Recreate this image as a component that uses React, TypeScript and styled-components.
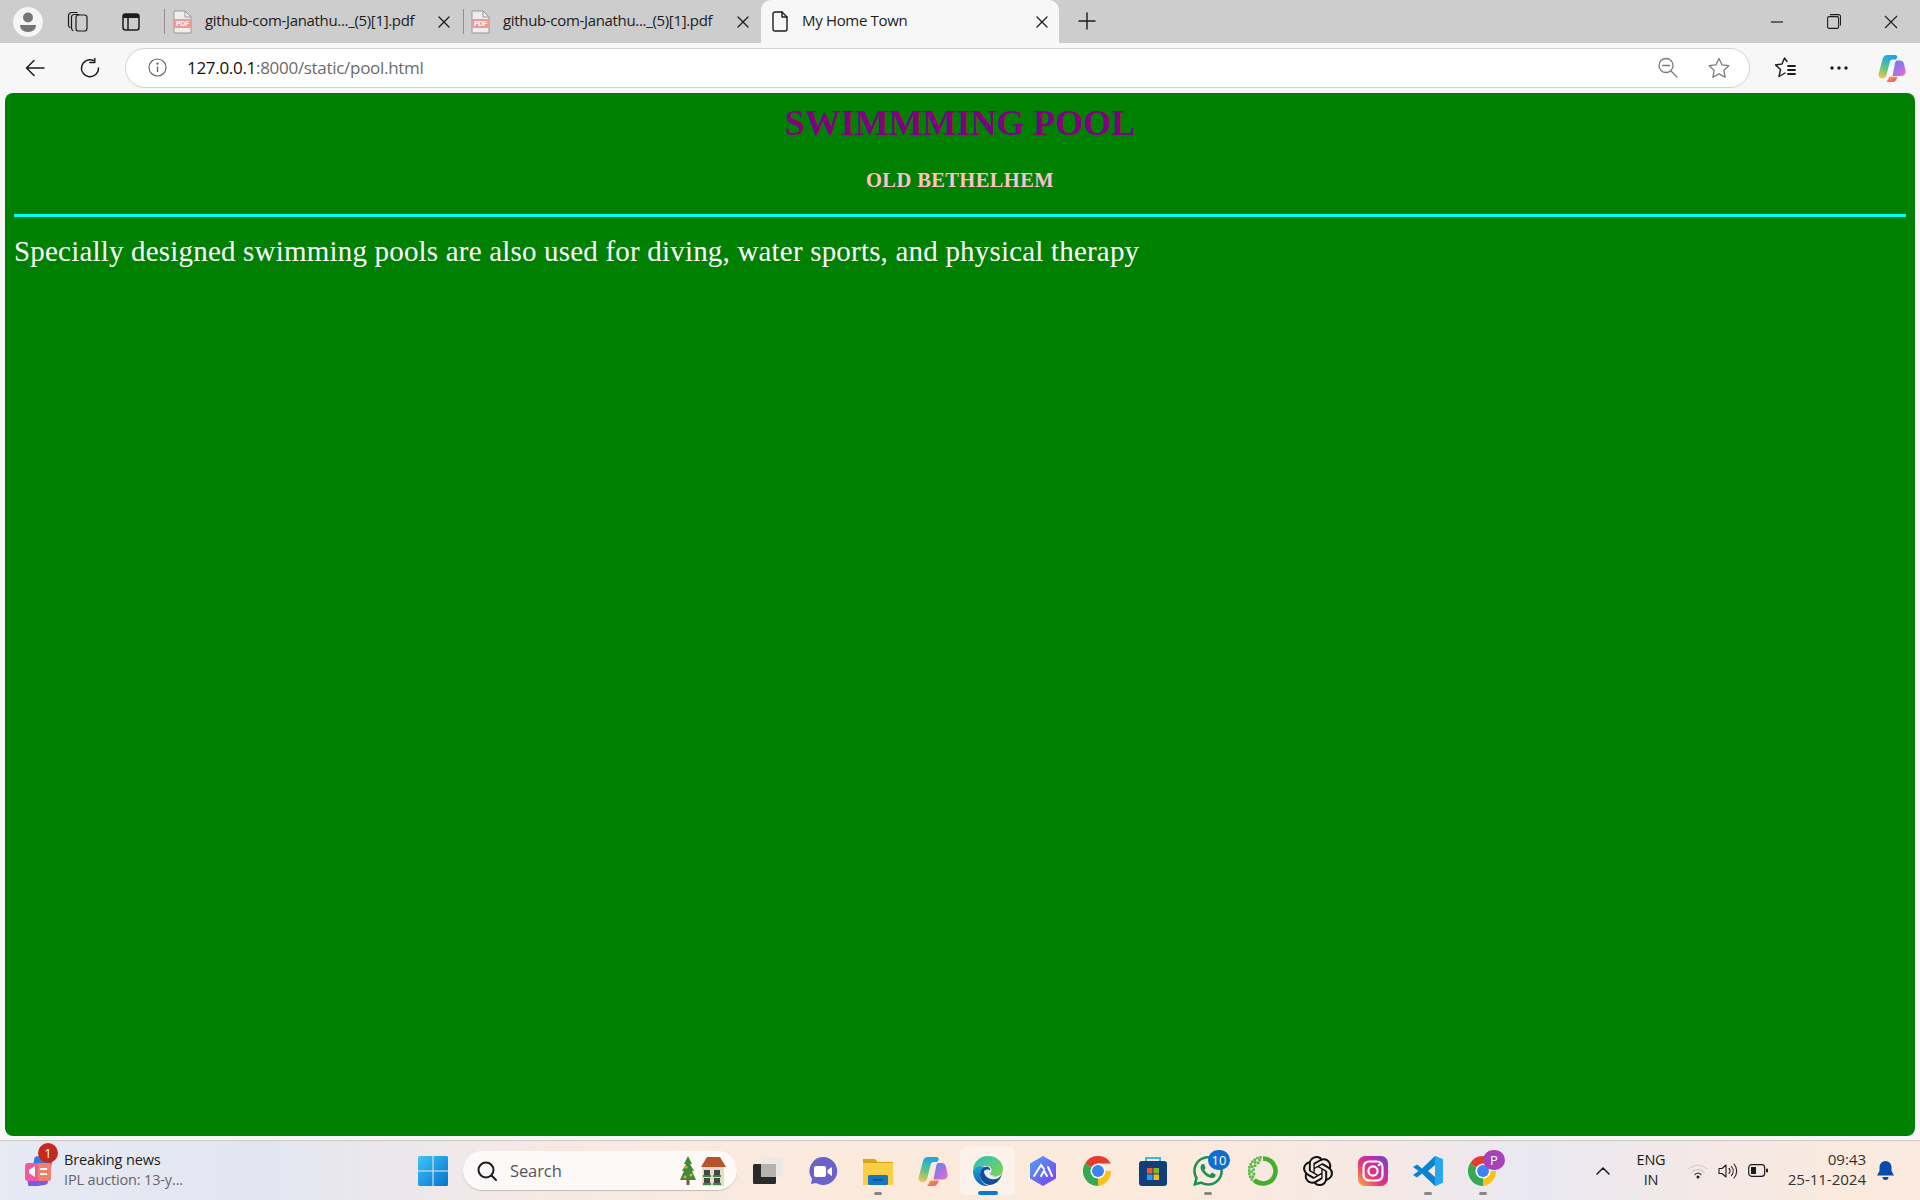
import React from "react";
import styled, { createGlobalStyle } from "styled-components";
import { SiOpenai, SiWhatsapp } from "react-icons/si";

const Global = createGlobalStyle`
  html, body { margin: 0; padding: 0; height: 100%; overflow: hidden; background: #f7f7f7; }
  #root { height: 100%; }
  * { box-sizing: border-box; }
`;

const UI = `"Open Sans", "Noto Sans", "Liberation Sans", sans-serif`;

const Screen = styled.div`
  width: 1920px;
  height: 1200px;
  display: flex;
  flex-direction: column;
  font-family: ${UI};
  color: #1c1c1c;
`;

const TabStrip = styled.div`
  height: 43px;
  background: #cdcdcd;
  display: flex;
  align-items: center;
  flex: none;
`;

const SlotBox = styled.div<{ $w: number; $lift?: boolean }>`
  width: ${(p) => p.$w}px;
  flex: none;
  height: 100%;
  display: flex;
  align-items: center;
  justify-content: center;
  padding-bottom: ${(p) => (p.$lift ? 2 : 0)}px;
`;

const StarSlot = styled(SlotBox)`
  margin: 0 15px 0 25px;
`;

const Separator = styled.div`
  width: 1px;
  height: 25px;
  background: #8e8e8e;
  flex: none;
`;

const Tab = styled.div<{ $w: number; $pad: number; $active?: boolean }>`
  width: ${(p) => p.$w}px;
  height: 43px;
  flex: none;
  display: flex;
  align-items: center;
  padding-left: ${(p) => p.$pad}px;
  background: ${(p) => (p.$active ? "#f7f7f7" : "transparent")};
  border-radius: ${(p) => (p.$active ? "10px 10px 0 0" : "0")};
  font-size: 15px;
  letter-spacing: -0.33px;
  white-space: nowrap;
`;

const TabLabel = styled.span<{ $w: number; $gap: number }>`
  width: ${(p) => p.$w}px;
  margin-left: ${(p) => p.$gap}px;
  flex: none;
  padding-bottom: 3px;
`;

const TabClose = styled.span<{ $gap: number }>`
  margin-left: ${(p) => p.$gap}px;
  display: flex;
`;

const WindowControls = styled.div`
  margin-left: auto;
  display: flex;
  height: 100%;
`;

const Toolbar = styled.div`
  height: 50px;
  flex: none;
  background: #f7f7f7;
  display: flex;
  align-items: center;
  padding-bottom: 1px;
`;

const AddressBar = styled.div`
  width: 1625px;
  margin-left: 15px;
  height: 40px;
  flex: none;
  border: 1.5px solid #d2d2d2;
  border-radius: 20px;
  background: #fff;
  display: flex;
  align-items: center;
  padding-left: 22px;
`;

const Url = styled.div`
  margin-left: 20px;
  font-size: 17px;
  letter-spacing: -0.3px;
  color: #6b6b6b;
  flex: 1;
  b { font-weight: 400; color: #111; }
`;

const PageWrap = styled.div`
  flex: 1;
  background: #f7f7f7;
  padding: 0 5px 4px;
  min-height: 0;
  display: flex;
`;

const Page = styled.main`
  flex: 1;
  background: #008000;
  border-radius: 8px;
  padding: 8px 9px;
  font-family: "Liberation Serif", "Times New Roman", serif;
`;

const Title = styled.h1`
  margin: 1px 0 0;
  text-align: center;
  font-size: 36px;
  line-height: 42px;
  font-weight: 700;
  color: #800080;
  letter-spacing: -0.05px;
`;

const Subtitle = styled.h3`
  margin: 24px 0 0;
  text-align: center;
  font-size: 20.5px;
  line-height: 24px;
  font-weight: 700;
  color: #ffc0cb;
  letter-spacing: 0.4px;
`;

const Rule = styled.hr`
  margin: 22px 0 0;
  height: 3px;
  border: 0;
  background: #00ffff;
`;

const Lead = styled.p`
  margin: 16px 0 0;
  font-size: 29px;
  line-height: 36px;
  color: #fff;
  letter-spacing: 0.19px;
`;

const Taskbar = styled.footer`
  height: 60px;
  flex: none;
  border-top: 1px solid #cfcac6;
  background: linear-gradient(90deg, #e7e9f3 0%, #e3e6f2 14%, #f6e9e6 28%, #fbeadc 45%, #fbeadd 62%, #f5e9e6 72%, #e9e8f2 80%, #f1e8ea 86%, #fbeadd 97%, #fae9e0 100%);
  display: flex;
  align-items: center;
`;

const News = styled.div`
  width: 404px;
  flex: none;
  display: flex;
  align-items: center;
  padding-left: 24px;
  position: relative;
`;

const NewsBadge = styled.span`
  position: absolute;
  left: 38px;
  top: -7px;
  width: 20px;
  height: 20px;
  border-radius: 50%;
  background: #c42b1c;
  color: #fff;
  font-size: 13px;
  line-height: 20px;
  text-align: center;
`;

const NewsText = styled.div`
  margin-left: 10px;
  font-size: 14.5px;
  line-height: 20px;
  letter-spacing: -0.15px;
  color: #1c1c1c;
  padding-bottom: 1px;
  span { display: block; color: #666; }
`;

const Tile = styled.div<{ $w?: number; $active?: boolean }>`
  width: ${(p) => p.$w ?? 55}px;
  height: 48px;
  flex: none;
  display: flex;
  align-items: center;
  justify-content: center;
  position: relative;
  border-radius: 5px;
  background: ${(p) => (p.$active ? "rgba(255,255,255,.4)" : "transparent")};
`;

const Running = styled.i<{ $active?: boolean }>`
  position: absolute;
  bottom: 0;
  left: 50%;
  transform: translateX(-50%);
  width: ${(p) => (p.$active ? 20 : 8)}px;
  height: ${(p) => (p.$active ? 4 : 3)}px;
  border-radius: 2px;
  background: ${(p) => (p.$active ? "#0a78d4" : "#8a8580")};
`;

const CountBadge = styled.span<{ $bg: string }>`
  position: absolute;
  top: 3px;
  right: 5px;
  width: 22px;
  height: 20px;
  border-radius: 10px;
  background: ${(p) => p.$bg};
  color: #fff;
  font-size: 13px;
  line-height: 20px;
  text-align: center;
`;

const SearchBox = styled.div`
  width: 274px;
  height: 39px;
  margin: 0 3px 0 2px;
  flex: none;
  border-radius: 20px;
  background: rgba(255, 255, 255, 0.72);
  box-shadow: 0 1px 1px rgba(120, 100, 90, 0.35);
  display: flex;
  align-items: center;
  padding-left: 13px;
  color: #555;
  font-size: 16.5px;
  letter-spacing: -0.1px;
`;

const SearchText = styled.span`
  margin-left: 12px;
  flex: 1;
`;

const SearchArt = styled.svg`
  margin-right: 11px;
`;

const Tray = styled.div`
  margin-left: auto;
  padding-right: 16px;
  display: flex;
  align-items: center;
  height: 100%;
  font-size: 14.5px;
  color: #1c1c1c;
`;

const Lang = styled.div`
  width: 50px;
  text-align: center;
  line-height: 20px;
  margin: 0 7px 2px 8px;
  letter-spacing: -0.2px;
`;

const TrayIcon = styled.div`
  width: 30px;
  display: flex;
  justify-content: center;
`;

const Clock = styled.div`
  width: 92px;
  margin: 0 0 3px 1px;
  text-align: right;
  font-size: 15.2px;
  line-height: 20px;
  letter-spacing: -0.1px;
  color: #333;
`;

const Bell = styled.div`
  width: 38px;
  display: flex;
  justify-content: center;
`;

const ln = { fill: "none", stroke: "#1c1c1c", strokeWidth: 1.4, strokeLinecap: "round" as const, strokeLinejoin: "round" as const };

const PdfIcon = () => (
  <svg width="19" height="24" viewBox="0 0 19 24">
    <path d="M1 1h11l6 6v16H1z" fill="#eee" stroke="#9a9a9a" />
    <path d="M12 1v6h6" fill="none" stroke="#9a9a9a" />
    <rect x="0" y="9" width="19" height="9" fill="#ec9a9a" />
    <text x="9.5" y="16" fontSize="7" fontWeight="700" textAnchor="middle" fill="#fff" fontFamily="Liberation Sans">PDF</text>
  </svg>
);
const CloseIcon = ({ s = 12 }: { s?: number }) => (
  <svg width={s} height={s} viewBox="0 0 12 12"><path d="M1 1l10 10M11 1L1 11" {...ln} strokeWidth={1.3} /></svg>
);

const EdgeIcon = () => (
  <svg width="30" height="30" viewBox="0 0 30 30">
    <defs>
      <linearGradient id="eg1" x1="0" y1="0" x2="1" y2="1"><stop offset="0" stopColor="#2bbcc0" /><stop offset="1" stopColor="#7fd64e" /></linearGradient>
      <linearGradient id="eg2" x1="0" y1="0" x2="0" y2="1"><stop offset="0" stopColor="#1ba3e0" /><stop offset="1" stopColor="#0c62b0" /></linearGradient>
    </defs>
    <path d="M0 15C0 6 7 0 15 0c9 0 15 6 15 13 0 5-3 7-7 7-3 0-6-1-6-3 3-2 2-7-4-7C7 10 2 12 0 15z" fill="url(#eg1)" />
    <path d="M0 15c2-4 7-6 12-4-3 2-5 4-5 8 0 5 4 10 9 11C7 31 0 24 0 15z" fill="url(#eg2)" />
    <path d="M7 19c0-4 2-7 5-8 3-1 6 1 5 4-1 6 6 7 12 3-2 7-7 11-13 11-5-1-9-5-9-10z" fill="#0f4f9b" />
    <path d="M11 15c2-2 6-2 6 0-1 6 6 7 12 3-3 5-7 6-11 5-4-1-7-4-7-8z" fill="#fff" opacity=".9" />
  </svg>
);
const ChromeIcon = ({ s = 30 }: { s?: number }) => (
  <svg width={s} height={s} viewBox="0 0 30 30">
    <path d="M15 15L2 7.5A15 15 0 0 1 28 7.5H15z" fill="#e33b2e" />
    <path d="M15 15L15 30A15 15 0 0 1 2 7.5z" fill="#34a853" />
    <path d="M15 15H28A15 15 0 0 1 15 30z" fill="#fbc116" />
    <circle cx="15" cy="15" r="7.6" fill="#fff" />
    <circle cx="15" cy="15" r="6" fill="#3f82f1" />
  </svg>
);
const CopilotIcon = ({ s = 30 }: { s?: number }) => (
  <svg width={s} height={s} viewBox="0 0 30 30">
    <defs>
      <linearGradient id={`cp1${s}`} x1="0.5" y1="0" x2="0.2" y2="1"><stop offset="0" stopColor="#1aa5e8" /><stop offset=".55" stopColor="#5cc48a" /><stop offset="1" stopColor="#f4c542" /></linearGradient>
      <linearGradient id={`cp2${s}`} x1="0" y1="0" x2="1" y2="1"><stop offset="0" stopColor="#4f8cf0" /><stop offset=".6" stopColor="#b66de0" /><stop offset="1" stopColor="#e878b8" /></linearGradient>
      <linearGradient id={`cp3${s}`} x1="0" y1="0" x2="1" y2="1"><stop offset="0" stopColor="#f5a14a" /><stop offset="1" stopColor="#ef4d6a" /></linearGradient>
    </defs>
    <path d="M10 1h8c2 0 3 1 2.5 3L19 6h-3c-2 0-3 1-3.5 3L9 23c-.5 2-2 3-4 3H4c-3 0-4-3-3-6L5 5c.7-2.5 2.5-4 5-4z" fill={`url(#cp1${s})`} />
    <path d="M19.5 7h4c2.5 0 4 1.5 4.500 4l1.500 7c.5 3-1 5.500-4.500 5.500h-9.500L18 11c.3-2 .8-3 1.500-4z" fill={`url(#cp2${s})`} />
    <path d="M12 24.500h9l-1.500 3c-.8 1.500-2 2.500-4 2.500h-5c-1 0-1.500-.5-1-1 1-1 2-2.500 2.500-4.500z" fill={`url(#cp3${s})`} />
  </svg>
);

const ringDots = [100, 113, 126, 139, 152, 165, 178, 191, 204, 217, 106, 132, 158, 184, 210, 120, 146, 172, 198].map((a, i) => {
  const r = i < 10 ? 14 : i < 15 ? 11.5 : 9.5;
  const rad = (a * Math.PI) / 180;
  return { x: 15 + r * Math.cos(rad) - 1.3, y: 15 - r * Math.sin(rad) - 1.3 };
});

const icons = {
  task: (
    <svg width="30" height="30" viewBox="0 0 30 30">
      <rect x="0" y="8" width="23" height="20" rx="1.5" fill="#2a2a2a" />
      <rect x="8" y="1" width="22" height="20" rx="1.5" fill="#ece8e4" opacity=".9" />
      <rect x="8" y="8" width="15" height="13" fill="#b5b2af" />
    </svg>
  ),
  meet: (
    <svg width="30" height="30" viewBox="0 0 30 30">
      <path d="M15 1a14 14 0 1 1-7 26l-5 1 1-5A14 14 0 0 1 15 1z" fill="#6a62c8" />
      <rect x="6" y="10" width="12" height="11" rx="2" fill="#fff" />
      <path d="M19.5 14l4.5-3v9l-4.5-3z" fill="#fff" />
    </svg>
  ),
  folder: (
    <svg width="30" height="28" viewBox="0 0 30 28">
      <path d="M0 2h12l3 3h15v4H0z" fill="#dca315" />
      <rect x="0" y="6" width="30" height="22" fill="#fbcf45" />
      <rect x="5" y="18" width="20" height="10" rx="1.5" fill="#1776c4" />
      <rect x="10" y="22" width="10" height="1.5" fill="#0b4a85" />
    </svg>
  ),
  hex: (
    <svg width="28" height="30" viewBox="0 0 28 30">
      <defs><linearGradient id="hx" x1="0" y1="0" x2="1" y2="1"><stop offset="0" stopColor="#4da2f5" /><stop offset="1" stopColor="#7b3ff0" /></linearGradient></defs>
      <path d="M14 0l13 7.5v15L14 30 1 22.5v-15z" fill="url(#hx)" />
      <path d="M5 20l7-11 3 4M12 20l3-5 3 5M19 11l4 9" fill="none" stroke="#fff" strokeWidth="2" strokeLinecap="round" />
    </svg>
  ),
  store: (
    <svg width="30" height="30" viewBox="0 0 30 30">
      <path d="M8 5V2h14v3" fill="none" stroke="#35b6ee" strokeWidth="2" />
      <rect x="1" y="5" width="28" height="25" rx="3" fill="#123f7a" />
      <rect x="9" y="12" width="5.5" height="5.5" fill="#ef5a24" />
      <rect x="15.5" y="12" width="5.5" height="5.5" fill="#7db928" />
      <rect x="9" y="18.5" width="5.5" height="5.5" fill="#1ba5ee" />
      <rect x="15.5" y="18.5" width="5.5" height="5.5" fill="#fdb813" />
    </svg>
  ),
  whatsapp: <SiWhatsapp size={30} color="#1f8f57" />,
  ring: (
    <svg width="30" height="30" viewBox="0 0 30 30">
      <path d="M15 2.5A12.5 12.5 0 1 1 6.2 23.9" fill="none" stroke="#43b02a" strokeWidth="4.6" />
      {ringDots.map((d, i) => (
        <rect key={i} x={d.x} y={d.y} width="2.6" height="2.6" fill="#5cb84a" />
      ))}
    </svg>
  ),
  gpt: <SiOpenai size={30} color="#111" />,
  insta: (
    <svg width="30" height="30" viewBox="0 0 30 30">
      <defs><linearGradient id="ig" x1="0" y1="1" x2="1" y2="0"><stop offset="0" stopColor="#fbb03b" /><stop offset=".4" stopColor="#e8347a" /><stop offset=".75" stopColor="#b52fb0" /><stop offset="1" stopColor="#5a52d0" /></linearGradient></defs>
      <rect width="30" height="30" rx="7" fill="url(#ig)" />
      <rect x="5.5" y="5.5" width="19" height="19" rx="5.5" fill="none" stroke="#fff" strokeWidth="2.2" />
      <circle cx="15" cy="15" r="4.6" fill="none" stroke="#fff" strokeWidth="2.2" />
      <circle cx="21" cy="9" r="1.3" fill="#fff" />
    </svg>
  ),
  vscode: (
    <svg width="30" height="30" viewBox="0 0 30 30">
      <path d="M22 0l8 3.5v23L22 30 9 17.5l-5 4L0 19l5.500-4L0 11l4-2.500 5 4z" fill="#0a84d0" />
      <path d="M22 0l8 3.5v23L22 30z" fill="#26a8f0" />
      <path d="M22 9l-7 6 7 6z" fill="#f8ebe1" />
    </svg>
  ),
};

const tiles: { key: string; el: React.ReactNode; run?: boolean; active?: boolean; badge?: [string, string] }[] = [
  { key: "task", el: icons.task },
  { key: "meet", el: icons.meet },
  { key: "folder", el: icons.folder, run: true },
  { key: "copilot", el: <CopilotIcon /> },
  { key: "edge", el: <EdgeIcon />, run: true, active: true },
  { key: "hex", el: icons.hex },
  { key: "chrome", el: <ChromeIcon /> },
  { key: "store", el: icons.store },
  { key: "wa", el: icons.whatsapp, run: true, badge: ["10", "#0f6cd0"] },
  { key: "ring", el: icons.ring },
  { key: "gpt", el: icons.gpt },
  { key: "insta", el: icons.insta },
  { key: "vs", el: icons.vscode, run: true },
  { key: "chrome2", el: <ChromeIcon />, run: true, badge: ["P", "#a742b8"] },
];

export default function App() {
  return (
    <Screen>
      <Global />
      <TabStrip>
        <SlotBox $w={56}>
          <svg width="30" height="30" viewBox="0 0 30 30">
            <circle cx="15" cy="15" r="15" fill="#f5f5f5" />
            <circle cx="15" cy="10.5" r="5" fill="#767676" />
            <path d="M7 18h16c0 4-3 7-8 7s-8-3-8-7z" fill="#767676" />
          </svg>
        </SlotBox>
        <SlotBox $w={44}>
          <svg width="22" height="22" viewBox="0 0 22 22" {...ln} strokeWidth={1.2}>
            <rect x="9" y="4" width="11" height="16" rx="2.5" />
            <path d="M6 19.5c-1-.5-1.5-1-1.5-2.5V6c0-1.5 1-2.5 2.5-2.5h5" />
            <path d="M3 16.5C2 16 1.5 15 1.5 14V5c0-2 1.5-3.5 3.5-3.5h5" />
          </svg>
        </SlotBox>
        <SlotBox $w={62}>
          <svg width="18" height="18" viewBox="0 0 18 18">
            <rect x="1" y="1" width="16" height="16" rx="2.5" fill="none" stroke="#1c1c1c" strokeWidth="1.5" />
            <path d="M1 3.5A2.5 2.5 0 0 1 3.5 1h11A2.5 2.5 0 0 1 17 3.5V5H1z" fill="#1c1c1c" />
            <path d="M6 5v12" stroke="#1c1c1c" strokeWidth="1.5" />
          </svg>
        </SlotBox>
        <SlotBox $w={5}><Separator /></SlotBox>
        <Tab $w={296} $pad={6}>
          <PdfIcon />
          <TabLabel $w={230} $gap={13}>github-com-Janathu..._(5)[1].pdf</TabLabel>
          <TabClose $gap={3}><CloseIcon /></TabClose>
        </Tab>
        <Separator />
        <Tab $w={297} $pad={7}>
          <PdfIcon />
          <TabLabel $w={230} $gap={13}>github-com-Janathu..._(5)[1].pdf</TabLabel>
          <TabClose $gap={4}><CloseIcon /></TabClose>
        </Tab>
        <Tab $w={298} $pad={11} $active>
          <svg width="16" height="21" viewBox="0 0 16 21" {...ln}>
            <path d="M1 3a2 2 0 0 1 2-2h7l5 5v12a2 2 0 0 1-2 2H3a2 2 0 0 1-2-2z" />
            <path d="M10 1v5h5" />
          </svg>
          <TabLabel $w={234} $gap={14}>My Home Town</TabLabel>
          <CloseIcon />
        </Tab>
        <SlotBox $w={56} $lift>
          <svg width="18" height="18" viewBox="0 0 18 18"><path d="M9 1v16M1 9h16" {...ln} /></svg>
        </SlotBox>
        <WindowControls>
          <SlotBox $w={57}><svg width="12" height="2" viewBox="0 0 12 2"><path d="M0 1h12" stroke="#1c1c1c" strokeWidth="1.2" /></svg></SlotBox>
          <SlotBox $w={57}>
            <svg width="14" height="15" viewBox="0 0 14 15" fill="none" stroke="#1c1c1c" strokeWidth="1.1">
              <rect x=".6" y="2.6" width="11" height="11.8" rx="1.5" />
              <path d="M3 .6h8.5a2 2 0 0 1 2 2v9" />
            </svg>
          </SlotBox>
          <SlotBox $w={58}>
            <svg width="14" height="14" viewBox="0 0 14 14"><path d="M1 1l12 12M13 1L1 13" stroke="#1c1c1c" strokeWidth="1.1" /></svg>
          </SlotBox>
        </WindowControls>
      </TabStrip>

      <Toolbar>
        <SlotBox $w={70}>
          <svg width="20" height="18" viewBox="0 0 20 18"><path d="M19 9H1.5M9 1.5L1.5 9 9 16.5" {...ln} strokeWidth={1.5} /></svg>
        </SlotBox>
        <SlotBox $w={40}>
          <svg width="20" height="20" viewBox="0 0 20 20" {...ln}>
            <path d="M13.5 2.5A8.5 8.5 0 1 0 18.5 10" />
            <path d="M13.8 .5v5h-5" transform="translate(1 -1)" />
          </svg>
        </SlotBox>
        <AddressBar>
          <svg width="19" height="19" viewBox="0 0 19 19" fill="none" stroke="#5f5f5f" strokeWidth="1.1">
            <circle cx="9.5" cy="9.5" r="8.5" />
            <path d="M9.5 8.5v5.5" strokeWidth="1.3" />
            <circle cx="9.5" cy="5.7" r=".6" fill="#5f5f5f" />
          </svg>
          <Url><b>127.0.0.1</b>:8000/static/pool.html</Url>
          <svg width="20" height="21" viewBox="0 0 20 21" fill="none" stroke="#7a7a7a" strokeWidth="1.3" strokeLinecap="round">
            <circle cx="8" cy="8.5" r="7" />
            <path d="M4.5 8.5h7M13 14l6 6" />
          </svg>
          <StarSlot $w={31}>
            <svg width="22" height="22" viewBox="0 0 22 22" fill="none" stroke="#7a7a7a" strokeWidth="1.3" strokeLinejoin="round">
              <path d="M11 1.5l3 6.3 6.8.9-5 4.7 1.3 6.8-6.1-3.3-6.1 3.3 1.3-6.8-5-4.7 6.8-.9z" />
            </svg>
          </StarSlot>
        </AddressBar>
        <SlotBox $w={69}>
          <svg width="22" height="22" viewBox="0 0 22 22" {...ln}>
            <path d="M13 4.5L10.5 1 8 7 1.5 8l5 4.5-1.5 7 6-3.5" />
            <path d="M14 9h7M14 13h7M14 17h7" strokeWidth={1.8} />
          </svg>
        </SlotBox>
        <SlotBox $w={40}>
          <svg width="18" height="4" viewBox="0 0 18 4" fill="#1c1c1c"><circle cx="2" cy="2" r="1.7" /><circle cx="9" cy="2" r="1.7" /><circle cx="16" cy="2" r="1.7" /></svg>
        </SlotBox>
        <SlotBox $w={66}><CopilotIcon s={28} /></SlotBox>
      </Toolbar>

      <PageWrap>
        <Page>
          <Title>SWIMMMING POOL</Title>
          <Subtitle>OLD BETHELHEM</Subtitle>
          <Rule />
          <Lead>Specially designed swimming pools are also used for diving, water sports, and physical therapy</Lead>
        </Page>
      </PageWrap>

      <Taskbar>
        <News>
          <svg width="30" height="30" viewBox="0 0 30 30">
            <rect x="9" y="1" width="18" height="22" rx="3" fill="#3f77e0" transform="rotate(8 18 12)" />
            <rect x="3" y="12" width="20" height="18" rx="3" fill="#7a5ae8" transform="rotate(-10 13 21)" />
            <rect x="1" y="7" width="26" height="18" rx="3" fill="#ee5aa0" />
            <rect x="14" y="7" width="13" height="18" rx="3" fill="#f4806a" />
            <path d="M5 14l6-4v11l-6-4z" fill="#fff" />
            <path d="M16 13h7M16 18h7" stroke="#fff" strokeWidth="1.8" />
          </svg>
          <NewsBadge>1</NewsBadge>
          <NewsText>Breaking news<span>IPL auction: 13-y...</span></NewsText>
        </News>
        <Tile $w={57}>
          <svg width="30" height="30" viewBox="0 0 30 30">
            <defs><linearGradient id="wn" x1="0" y1="0" x2="1" y2="1"><stop offset="0" stopColor="#3fc4f7" /><stop offset="1" stopColor="#0672cf" /></linearGradient></defs>
            <path d="M0 1.5A1.5 1.5 0 0 1 1.5 0h13v14.5H0zM15.5 0h13A1.5 1.5 0 0 1 30 1.5v13H15.5zM0 15.5h14.5V30h-13A1.5 1.5 0 0 1 0 28.5zM15.5 15.5H30v13a1.5 1.5 0 0 1-1.5 1.5h-13z" fill="url(#wn)" />
          </svg>
        </Tile>
        <SearchBox>
          <svg width="22" height="22" viewBox="0 0 22 22" fill="none" stroke="#1c1c1c" strokeWidth="2" strokeLinecap="round">
            <circle cx="10" cy="10" r="7.5" />
            <path d="M15.5 15.5l4.5 4.5" />
          </svg>
          <SearchText>Search</SearchText>
          <SearchArt width="46" height="30" viewBox="0 0 46 30">
            <path d="M8 0l4 8h-2l4 7h-2l4 9H0l4-9H2l4-7H4z" fill="#3d8a3a" />
            <rect x="6.5" y="24" width="3" height="5" fill="#7a5a3a" />
            <circle cx="6" cy="11" r="1.6" fill="#f0a030" />
            <circle cx="11" cy="19" r="1.6" fill="#f0a030" />
            <circle cx="5" cy="21" r="1.6" fill="#f0a030" />
            <rect x="22" y="10" width="22" height="20" fill="#e9d9c8" />
            <path d="M21 11l6-10h13l6 10z" fill="#b5532c" />
            <path d="M24 14h6v5h-6zM34 14h6v5h-6zM24 22h6v5h-6zM34 22h6v5h-6z" fill="#3f4a45" />
            <path d="M23 20h8M33 20h8M23 28h8M33 28h8" stroke="#3a8a3a" strokeWidth="2" />
          </SearchArt>
        </SearchBox>
        {tiles.map((t) => (
          <Tile key={t.key} $active={t.active}>
            {t.el}
            {t.run && <Running $active={t.active} />}
            {t.badge && <CountBadge $bg={t.badge[1]}>{t.badge[0]}</CountBadge>}
          </Tile>
        ))}
        <Tray>
          <TrayIcon>
            <svg width="14" height="8" viewBox="0 0 14 8"><path d="M1 7l6-6 6 6" {...ln} strokeWidth={1.5} /></svg>
          </TrayIcon>
          <Lang>ENG<br />IN</Lang>
          <TrayIcon>
            <svg width="20" height="16" viewBox="0 0 20 16" fill="none" strokeLinecap="round">
              <path d="M1 6a13 13 0 0 1 18 0" stroke="#d5d0cb" strokeWidth="1.2" />
              <path d="M4 9a8.5 8.5 0 0 1 12 0" stroke="#c8c3be" strokeWidth="1.2" />
              <path d="M7 11.5a4 4 0 0 1 6 0" stroke="#444" strokeWidth="1.2" />
              <circle cx="10" cy="14" r="1.5" fill="#1c1c1c" />
            </svg>
          </TrayIcon>
          <TrayIcon>
            <svg width="20" height="16" viewBox="0 0 20 16" fill="none" stroke="#1c1c1c" strokeWidth="1.1" strokeLinecap="round" strokeLinejoin="round">
              <path d="M1 5.5h3L8 2v12l-4-3.5H1z" />
              <path d="M11 5.5a3.5 3.5 0 0 1 0 5M13.5 3.5a7 7 0 0 1 0 9M16 1a10.5 10.5 0 0 1 0 14" />
            </svg>
          </TrayIcon>
          <TrayIcon>
            <svg width="20" height="13" viewBox="0 0 20 13">
              <rect x=".7" y=".7" width="16" height="11.6" rx="3" fill="none" stroke="#1c1c1c" strokeWidth="1.2" />
              <rect x="3" y="3" width="5" height="7" fill="#1c1c1c" />
              <rect x="18" y="4.5" width="2" height="4" rx="1" fill="#1c1c1c" />
            </svg>
          </TrayIcon>
          <Clock>09:43<br />25-11-2024</Clock>
          <Bell>
            <svg width="17" height="20" viewBox="0 0 17 20" fill="#0a4aa8">
              <path d="M8.5 0a6 6 0 0 1 6 6v4l2.5 4.5H0L2.5 10V6a6 6 0 0 1 6-6z" />
              <path d="M5.5 16h6a3 3 0 0 1-6 0z" />
            </svg>
          </Bell>
        </Tray>
      </Taskbar>
    </Screen>
  );
}
